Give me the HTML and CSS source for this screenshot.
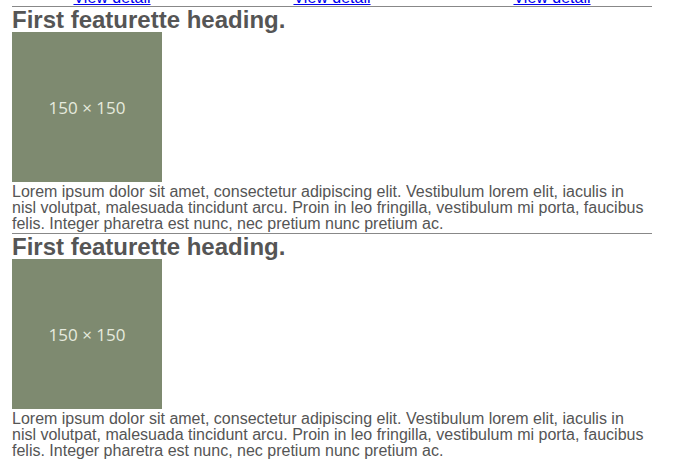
FILE: index.html
```html
<!DOCTYPE html>
<html>
<head>
<meta charset="utf-8">
<link rel="stylesheet" href="styles.css">
</head>
<body>
<div class="page">
  <div class="cols">
    <div class="col"><a href="#">View detail</a></div>
    <div class="col"><a href="#">View detail</a></div>
    <div class="col"><a href="#">View detail</a></div>
  </div>
  <hr class="rule">
  <div class="featurette">
    <h2 class="feat-heading">First featurette heading.</h2>
    <div class="ph"><span>150 × 150</span></div>
    <p class="feat-text">Lorem ipsum dolor sit amet, consectetur adipiscing elit. Vestibulum lorem elit, iaculis in nisl volutpat, malesuada tincidunt arcu. Proin in leo fringilla, vestibulum mi porta, faucibus felis. Integer pharetra est nunc, nec pretium nunc pretium ac.</p>
  </div>
  <hr class="rule">
  <div class="featurette">
    <h2 class="feat-heading">First featurette heading.</h2>
    <div class="ph"><span>150 × 150</span></div>
    <p class="feat-text">Lorem ipsum dolor sit amet, consectetur adipiscing elit. Vestibulum lorem elit, iaculis in nisl volutpat, malesuada tincidunt arcu. Proin in leo fringilla, vestibulum mi porta, faucibus felis. Integer pharetra est nunc, nec pretium nunc pretium ac.</p>
  </div>
</div>
</body>
</html>
```
FILE: styles.css
```css
html, body {
  margin: 0;
  padding: 0;
  background: #fff;
}
.page {
  margin: -10px 0 0 12px;
  width: 640px;
  color: #555;
  font: 16px/16px "Liberation Sans", Arial, sans-serif;
}
.cols {
  display: flex;
  margin-left: -10px;
  width: 660px;
}
.col {
  flex: 0 0 220px;
  text-align: center;
}
.col a {
  color: #0000ee;
}
.rule {
  margin: 0;
  border: 0;
  border-top: 1px solid #888;
  height: 0;
}
.featurette {
  padding-bottom: 1px;
}
.feat-heading {
  margin: 0;
  font-size: 24px;
  line-height: 25px;
  font-weight: bold;
  color: #555;
}
.ph {
  width: 150px;
  height: 150px;
  background: #7e8a70;
  display: flex;
  align-items: center;
  justify-content: center;
}
.ph span {
  font: 17px "Open Sans", sans-serif;
  color: #e6eade;
}
.feat-text {
  margin: 2px 0 0 0;
}
```
